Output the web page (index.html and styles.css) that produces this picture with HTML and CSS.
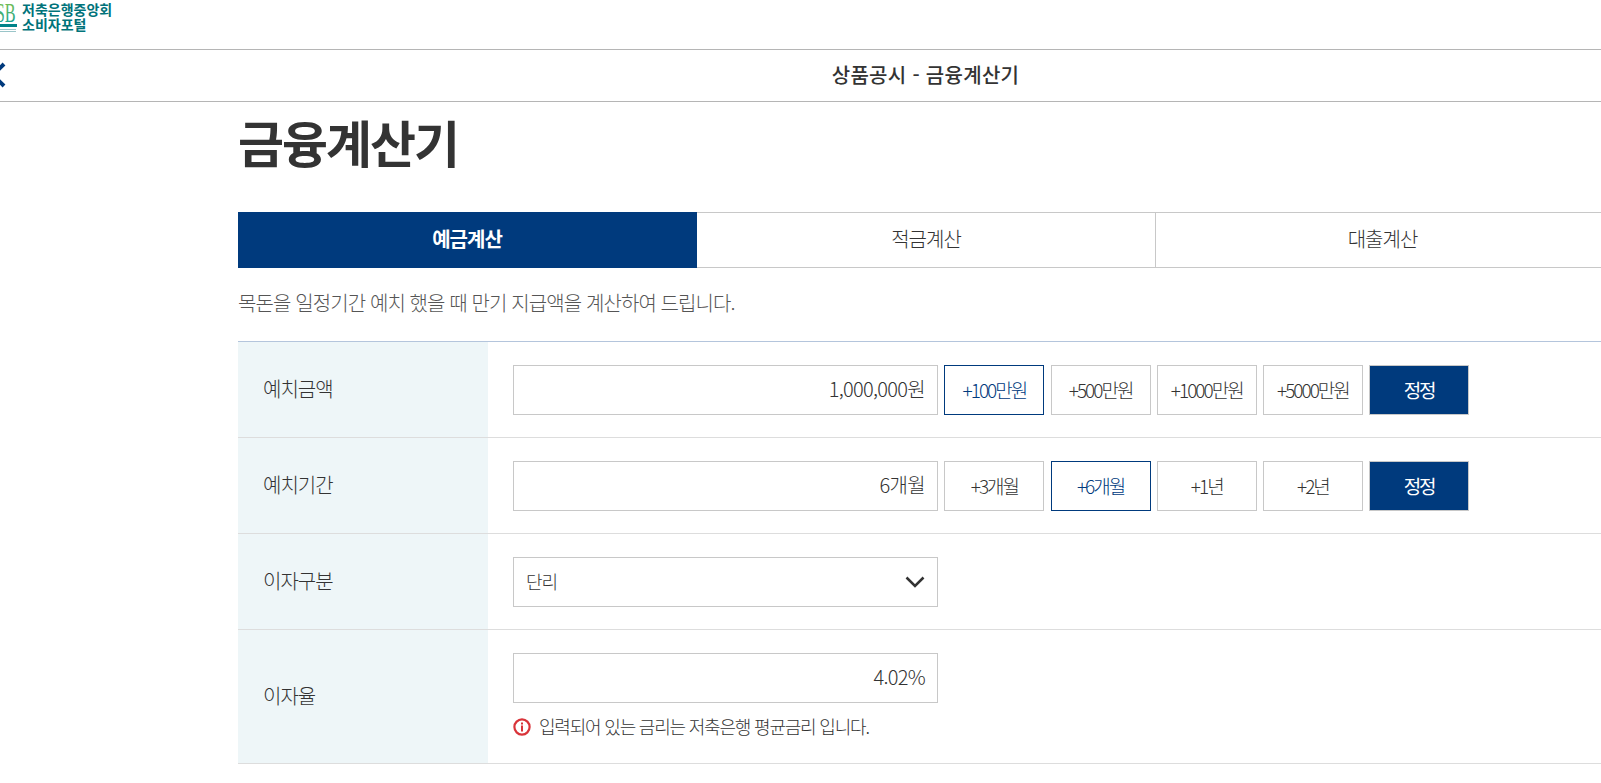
FILE: index.html
```html
<!DOCTYPE html>
<html lang="ko">
<head>
    <meta charset="UTF-8">
    <title>금융계산기</title>
    <link rel="stylesheet" href="styles.css">
</head>
<body>
    <header class="top">
        <a class="logo" href="#">
            <svg class="logo-mark" width="22" height="36" viewBox="0 0 22 36">
                <defs>
                    <linearGradient id="sb" x1="0" y1="0" x2="0" y2="1">
                        <stop offset="0" stop-color="#8cc63f"/>
                        <stop offset="1" stop-color="#009aa6"/>
                    </linearGradient>
                </defs>
                <text x="-7" y="22" class="logo-sb" transform="scale(.6 1)" fill="url(#sb)">SB</text>
                <rect x="0" y="24" width="17" height="3" fill="#00838a"/>
                <rect x="0" y="29" width="16" height="1" fill="#9ac5c9"/>
                <rect x="0" y="31" width="16" height="1" fill="#9ac5c9"/>
            </svg>
            <span class="logo-text">저축은행중앙회<br>소비자포털</span>
        </a>
    </header>

    <nav class="subnav">
        <a class="back" href="#">
            <svg width="14" height="28" viewBox="0 0 14 28"><path d="M4 3 L-7 14 L4 25" fill="none" stroke="#003a7d" stroke-width="4"/></svg>
        </a>
        <span class="subnav-title">상품공시 - 금융계산기</span>
    </nav>

    <main class="content">
        <h1 class="page-title">금융계산기</h1>

        <ul class="tabs">
            <li class="tab on">예금계산</li>
            <li class="tab">적금계산</li>
            <li class="tab">대출계산</li>
        </ul>

        <p class="desc">목돈을 일정기간 예치 했을 때 만기 지급액을 계산하여 드립니다.</p>

        <div class="form">
            <div class="row">
                <div class="row-label">예치금액</div>
                <div class="row-body">
                    <div class="field">1,000,000원</div>
                    <button class="btn sel" type="button">+100만원</button>
                    <button class="btn" type="button">+500만원</button>
                    <button class="btn" type="button">+1000만원</button>
                    <button class="btn" type="button">+5000만원</button>
                    <button class="btn fix" type="button">정정</button>
                </div>
            </div>
            <div class="row">
                <div class="row-label">예치기간</div>
                <div class="row-body">
                    <div class="field">6개월</div>
                    <button class="btn" type="button">+3개월</button>
                    <button class="btn sel" type="button">+6개월</button>
                    <button class="btn" type="button">+1년</button>
                    <button class="btn" type="button">+2년</button>
                    <button class="btn fix" type="button">정정</button>
                </div>
            </div>
            <div class="row">
                <div class="row-label">이자구분</div>
                <div class="row-body">
                    <div class="field select">
                        <span class="select-value">단리</span>
                        <svg width="20" height="12" viewBox="0 0 20 12"><path d="M1.5 1.5 L10 10 L18.5 1.5" fill="none" stroke="#333" stroke-width="2.5"/></svg>
                    </div>
                </div>
            </div>
            <div class="row last">
                <div class="row-label">이자율</div>
                <div class="row-body stack">
                    <div class="field">4.02%</div>
                    <p class="note">
                        <svg width="18" height="18" viewBox="0 0 18 18">
                            <circle cx="9" cy="9" r="7.6" fill="#fff" stroke="#d9343a" stroke-width="2.2"/>
                            <rect x="8" y="7.5" width="2" height="6" fill="#d9343a"/>
                            <rect x="8" y="4.5" width="2" height="2" fill="#d9343a"/>
                        </svg>
                        입력되어 있는 금리는 저축은행 평균금리 입니다.
                    </p>
                </div>
            </div>
        </div>
    </main>
</body>
</html>
```

FILE: styles.css
```css
html, body {
    margin: 0;
    padding: 0;
    height: 783px;
    overflow: hidden;
}
body {
    width: 1851px;
    font-family: "Noto Sans CJK KR", "Noto Sans", sans-serif;
    background: #fff;
    color: #333;
}
.top {
    height: 49px;
    border-bottom: 1px solid #b5b5b5;
}
.logo {
    display: flex;
    color: #00737a;
    text-decoration: none;
}
.logo-mark {
    display: block;
}
.logo-sb {
    font-family: "Liberation Serif", serif;
    font-size: 27px;
}
.logo-text {
    padding-top: 2px;
    font-size: 14px;
    font-weight: 700;
    line-height: 15px;
}
.subnav {
    height: 51px;
    border-bottom: 1px solid #b5b5b5;
    display: flex;
    align-items: center;
    justify-content: center;
    position: relative;
}
.back {
    position: absolute;
    left: 0;
    top: 11px;
}
.subnav-title {
    padding-bottom: 2px;
    font-size: 20px;
    font-weight: 500;
    letter-spacing: 0.3px;
    color: #333;
}
.content {
    width: 1500px;
    margin-left: 238px;
}
.page-title {
    margin: 0;
    padding-top: 4px;
    font-size: 50px;
    line-height: 70px;
    font-weight: 700;
    letter-spacing: -2px;
    color: #333;
}
.tabs {
    display: flex;
    margin: 36px 0 0;
    padding: 0;
    list-style: none;
}
.tab {
    width: 458px;
    height: 54px;
    line-height: 52px;
    text-align: center;
    font-size: 20px;
    font-weight: 300;
    border: solid #c8c8c8;
    border-width: 1px 1px 1px 0;
    letter-spacing: -1px;
}
.tab:last-child {
    width: 453px;
}
.tab.on {
    background: #003a7d;
    border-color: #003a7d;
    color: #fff;
    font-weight: 700;
}
.desc {
    margin: 0;
    padding-top: 21px;
    font-size: 20px;
    line-height: 28px;
    font-weight: 300;
    letter-spacing: -0.9px;
    color: #555;
}
.form {
    margin-top: 24px;
    border-top: 1px solid #b4c5dc;
}
.row {
    display: flex;
    min-height: 95px;
    border-bottom: 1px solid #ddd;
}
.row.last {
    min-height: 133px;
}
.row-label {
    width: 250px;
    padding: 0 0 2px 25px;
    box-sizing: border-box;
    display: flex;
    align-items: center;
    background: #eef6f8;
    font-size: 20px;
    font-weight: 300;
    letter-spacing: -1px;
}
.row-body {
    display: flex;
    align-items: flex-start;
    gap: 6.2px;
    padding: 23px 0 0 25px;
}
.row-body.stack {
    flex-direction: column;
    gap: 0;
}
.field {
    width: 425px;
    height: 50px;
    margin-right: 0.2px;
    box-sizing: border-box;
    border: 1px solid #c8c8c8;
    line-height: 46px;
    padding: 0 12px 0 13px;
    text-align: right;
    font-size: 20px;
    font-weight: 300;
    letter-spacing: -0.7px;
}
.select {
    display: flex;
    align-items: center;
    justify-content: space-between;
    padding-left: 12px;
    text-align: left;
    font-size: 18px;
    letter-spacing: -1px;
}
.select-value {
    margin-top: -3px;
}
.btn {
    width: 100px;
    height: 50px;
    box-sizing: border-box;
    border: 1px solid #c8c8c8;
    background: #fff;
    padding: 0 0 2px;
    font-family: inherit;
    font-size: 19px;
    font-weight: 300;
    letter-spacing: -2px;
    color: #333;
}
.btn.sel {
    border-color: #003a7d;
    color: #003a7d;
}
.btn.fix {
    background: #003a7d;
    color: #fff;
    font-weight: 400;
}
.note {
    display: flex;
    align-items: center;
    gap: 8px;
    margin: 11px 0 0;
    font-size: 18px;
    line-height: 24px;
    font-weight: 300;
    letter-spacing: -1.2px;
}
.note svg {
    margin-top: 2px;
}
```
